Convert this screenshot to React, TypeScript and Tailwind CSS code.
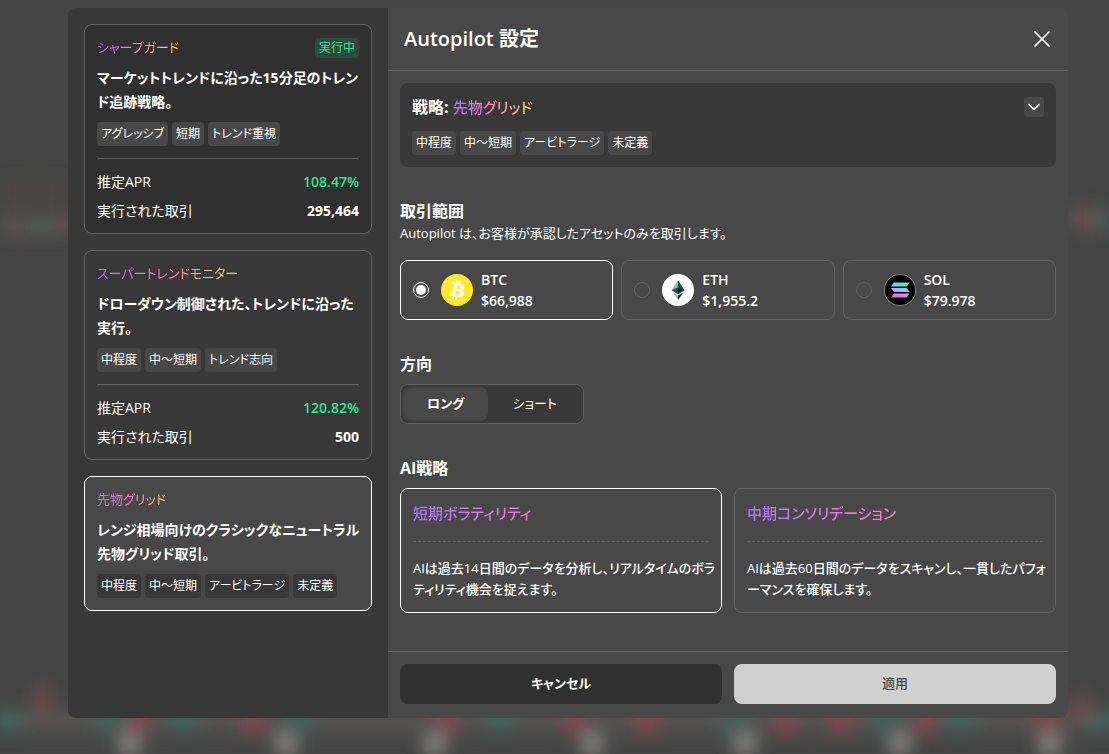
import { useState, type ReactNode } from "react";
import clsx from "clsx";
import { ChevronDown, X } from "lucide-react";

interface Strategy {
  id: string;
  name: string;
  description: string[];
  tags: string[];
  running?: boolean;
  apr?: string;
  trades?: string;
}

const strategies: Strategy[] = [
  {
    id: "sharp-guard",
    name: "シャープガード",
    description: ["マーケットトレンドに沿った15分足のトレン", "ド追跡戦略。"],
    tags: ["アグレッシブ", "短期", "トレンド重視"],
    running: true,
    apr: "108.47%",
    trades: "295,464",
  },
  {
    id: "super-trend",
    name: "スーパートレンドモニター",
    description: ["ドローダウン制御された、トレンドに沿った", "実行。"],
    tags: ["中程度", "中〜短期", "トレンド志向"],
    apr: "120.82%",
    trades: "500",
  },
  {
    id: "futures-grid",
    name: "先物グリッド",
    description: ["レンジ相場向けのクラシックなニュートラル", "先物グリッド取引。"],
    tags: ["中程度", "中〜短期", "アービトラージ", "未定義"],
  },
];

const BtcIcon = () => (
  <svg viewBox="0 0 32 32" className="size-8 shrink-0" aria-hidden="true">
    <circle cx="16" cy="16" r="16" fill="#ffe92e" />
    <path
      fill="#fff"
      d="M23.19 14.02c.31-2.1-1.28-3.22-3.47-3.98l.71-2.84-1.73-.43-.69 2.77c-.46-.11-.92-.22-1.39-.33l.7-2.78-1.73-.43-.71 2.84c-.38-.08-.75-.17-1.1-.26l-2.39-.6-.46 1.85s1.28.3 1.26.31c.7.18.83.64.8 1.01l-.8 3.24c.05.01.11.03.18.06l-.18-.05-1.14 4.53c-.08.21-.3.53-.8.41.02.03-1.25-.31-1.25-.31l-.86 1.98 2.25.56c.42.11.83.22 1.23.32l-.71 2.87 1.72.43.71-2.84c.47.13.93.25 1.38.36l-.71 2.83 1.73.43.71-2.87c2.95.56 5.17.33 6.1-2.33.75-2.15-.04-3.39-1.59-4.19 1.13-.26 1.98-1 2.2-2.54zm-3.95 5.54c-.53 2.15-4.15.99-5.32.69l.95-3.81c1.17.29 4.93.87 4.37 3.12zm.54-5.57c-.49 1.95-3.5.96-4.48.72l.86-3.45c.98.24 4.12.7 3.62 2.73z"
    />
  </svg>
);

const EthIcon = () => (
  <svg viewBox="0 0 32 32" className="size-8 shrink-0" aria-hidden="true">
    <circle cx="16" cy="16" r="16" fill="#fff" />
    <path d="M16 6v8L9.500 16.300z" fill="#8fb8ae" />
    <path d="M16 6l6.500 10.300L16 14z" fill="#1d4a44" />
    <path d="M9.500 16.300L16 13.600v6.600z" fill="#1f5149" />
    <path d="M22.500 16.300L16 13.600v6.600z" fill="#0b2f2b" />
    <path d="M11 18.600L16 21.500V26z" fill="#8fb8ae" />
    <path d="M22 18L16 21.500V26z" fill="#123f39" />
  </svg>
);

const SolIcon = () => (
  <svg viewBox="0 0 32 32" className="size-8 shrink-0" aria-hidden="true">
    <defs>
      <linearGradient id="sol" gradientUnits="userSpaceOnUse" x1="19" y1="9" x2="14" y2="24">
        <stop offset="0.1" stopColor="#4fe8d8" />
        <stop offset="0.5" stopColor="#b4b4f8" />
        <stop offset="0.9" stopColor="#ee6cf0" />
      </linearGradient>
    </defs>
    <circle cx="16" cy="16" r="15.700" fill="#000" stroke="#c9c9c9" strokeWidth="0.600" />
    <g fill="url(#sol)">
      <path d="M9.800 8.600h15.700l-2.700 4H7z" />
      <path d="M7 14h15.800l2.700 4H9.800z" />
      <path d="M9.800 19.600h15.700l-2.700 4H7z" />
    </g>
  </svg>
);

const assets = [
  { symbol: "BTC", price: "$66,988", icon: <BtcIcon /> },
  { symbol: "ETH", price: "$1,955.2", icon: <EthIcon /> },
  { symbol: "SOL", price: "$79.978", icon: <SolIcon /> },
];

const aiModes = [
  {
    id: "short",
    name: "短期ボラティリティ",
    text: ["AIは過去14日間のデータを分析し、リアルタイムのボラ", "ティリティ機会を捉えます。"],
  },
  {
    id: "mid",
    name: "中期コンソリデーション",
    text: ["AIは過去60日間のデータをスキャンし、一貫したパフォ", "ーマンスを確保します。"],
  },
];

const GradientText = ({ children, block }: { children: ReactNode; block?: boolean }) => (
  <span
    className={clsx(
      "bg-linear-to-r from-[#ac74ff] via-[#ff7ac6] via-45% to-[#ffd35c] bg-clip-text text-transparent",
      block ? "block" : "inline-block"
    )}
  >
    {children}
  </span>
);

const Lines = ({ lines }: { lines: string[] }) => (
  <>
    {lines.map((line) => (
      <span key={line} className="block whitespace-nowrap">
        {line}
      </span>
    ))}
  </>
);

const Tags = ({ tags, dark }: { tags: string[]; dark?: boolean }) => (
  <span className="flex gap-1">
    {tags.map((tag) => (
      <span
        key={tag}
        className={clsx(
          "rounded px-1 text-xs leading-6 whitespace-nowrap",
          dark ? "bg-[#383838]" : "bg-[#484848]"
        )}
      >
        {tag}
      </span>
    ))}
  </span>
);

// blurred chart that shows through behind the dialog
const Backdrop = () => (
  <svg
    className="absolute inset-0 h-full w-full"
    viewBox="0 0 1109 754"
    preserveAspectRatio="none"
    aria-hidden="true"
  >
    <defs>
      <filter id="soft" x="-50%" y="-50%" width="200%" height="200%">
        <feGaussianBlur stdDeviation="8" />
      </filter>
    </defs>
    <g filter="url(#soft)">
      <rect x="0" y="180" width="68" height="30" fill="#4c4543" />
      <rect x="0" y="218" width="80" height="16" fill="#545a57" />
      <rect x="14" y="220" width="10" height="16" fill="#644a4a" />
      <rect x="58" y="215" width="12" height="20" fill="#664a4a" />
      <rect x="1068" y="208" width="40" height="20" fill="#555755" />
      <rect x="1079" y="208" width="12" height="24" fill="#704c4c" />
      <rect x="1100" y="208" width="12" height="24" fill="#44605a" />
      <rect x="0" y="708" width="1109" height="26" fill="#54514f" />
      {[137, 253, 445, 575, 646, 785, 842, 925, 1046].map((x) => (
        <rect key={x} x={x - 9} y="706" width="18" height="28" fill="#85474c" />
      ))}
      {[8, 110, 184, 300, 500, 735, 885, 960, 1100].map((x) => (
        <rect key={x} x={x - 16} y="710" width="32" height="22" fill="#42605a" />
      ))}
      <rect x="36" y="686" width="14" height="26" fill="#724a4a" />
      <rect x="1076" y="694" width="12" height="26" fill="#724a4a" />
      {[130, 286, 435, 592, 745, 900, 1050].map((x) => (
        <circle key={x} cx={x} cy="744" r="13" fill="#7e7c7a" />
      ))}
    </g>
  </svg>
);

const StrategyCard = ({
  strategy,
  selected,
  onSelect,
}: {
  strategy: Strategy;
  selected: boolean;
  onSelect: () => void;
}) => (
  <button
    type="button"
    aria-pressed={selected}
    onClick={onSelect}
    className={clsx(
      "block w-full rounded-lg border p-3 text-left",
      selected ? "border-white bg-[#484848]" : "border-[#626262]",
      strategy.running && "bg-[#303030]"
    )}
  >
    <span className="flex h-[21px] items-center justify-between text-[13px]">
      <GradientText>{strategy.name}</GradientText>
      {strategy.running && (
        <span className="rounded bg-[#2d4a3e] px-1 text-xs leading-5 text-[#34e39a]">実行中</span>
      )}
    </span>
    <span className="my-2 block text-sm leading-6 font-bold">
      <Lines lines={strategy.description} />
    </span>
    <Tags tags={strategy.tags} dark={selected} />
    {strategy.apr && (
      <span className="mt-3 flex flex-col gap-2 border-t border-[#626262] pt-3 text-sm leading-[21px]">
        <span className="flex justify-between">
          <span>推定APR</span>
          <span className="font-semibold text-[#34e39a]">{strategy.apr}</span>
        </span>
        <span className="flex justify-between">
          <span>実行された取引</span>
          <span className="font-bold">{strategy.trades}</span>
        </span>
      </span>
    )}
  </button>
);

const App = () => {
  const [selectedId, setSelectedId] = useState("futures-grid");
  const [asset, setAsset] = useState("BTC");
  const [side, setSide] = useState("ロング");
  const [mode, setMode] = useState("short");

  const current = strategies.find((s) => s.id === selectedId) ?? strategies[0];

  return (
    <div className="relative flex min-h-screen overflow-hidden bg-[#454545] pt-2 pr-[41px] pb-9 pl-[68px] font-['Open_Sans','Noto_Sans_CJK_JP',sans-serif] text-white [font-feature-settings:'palt']">
      <Backdrop />
      <div
        role="dialog"
        aria-labelledby="dialog-title"
        className="relative flex flex-1 overflow-hidden rounded-lg bg-[#484848]"
      >
        <aside className="flex w-80 shrink-0 flex-col gap-4 bg-[#383838] p-4">
          {strategies.map((s) => (
            <StrategyCard
              key={s.id}
              strategy={s}
              selected={s.id === selectedId}
              onSelect={() => setSelectedId(s.id)}
            />
          ))}
        </aside>

        <section className="flex min-w-0 flex-1 flex-col">
          <header className="flex items-center justify-between border-b border-[#626262] p-4">
            <h1 id="dialog-title" className="text-xl leading-[30px] font-semibold">
              Autopilot 設定
            </h1>
            <button type="button" aria-label="閉じる" className="-mr-1">
              <X className="size-7" strokeWidth={1.5} />
            </button>
          </header>

          <div className="flex flex-1 flex-col gap-8 p-3">
            <div className="rounded-lg bg-[#383838] p-3">
              <div className="mb-3 flex items-center justify-between">
                <h2 className="text-base leading-6 font-bold">
                  戦略:{" "}
                  <span className="text-[15px] font-medium">
                    <GradientText>{current.name}</GradientText>
                  </span>
                </h2>
                <button
                  type="button"
                  aria-label="詳細を表示"
                  className="flex size-5 items-center justify-center rounded bg-[#484848]"
                >
                  <ChevronDown className="size-5" strokeWidth={2} />
                </button>
              </div>
              <Tags tags={current.tags} />
            </div>

            <div>
              <h2 className="text-base leading-6 font-bold">取引範囲</h2>
              <p className="text-[13px] leading-[21px]">
                Autopilot は、お客様が承認したアセットのみを取引します。
              </p>
              <div className="mt-4 grid grid-cols-3 gap-2">
                {assets.map(({ symbol, price, icon }) => (
                  <label
                    key={symbol}
                    className={clsx(
                      "flex items-center rounded-lg border px-3 py-2",
                      asset === symbol ? "border-white" : "border-[#626262]"
                    )}
                  >
                    <input
                      type="radio"
                      name="asset"
                      value={symbol}
                      checked={asset === symbol}
                      onChange={() => setAsset(symbol)}
                      className="mr-3 size-4 shrink-0 appearance-none rounded-full border border-[#626262] checked:border-white checked:bg-white checked:bg-clip-content checked:p-0.5"
                    />
                    {icon}
                    <span className="ml-2 text-sm leading-[21px] font-semibold">
                      <span className="block">{symbol}</span>
                      <span className="block">{price}</span>
                    </span>
                  </label>
                ))}
              </div>
            </div>

            <div>
              <h2 className="mb-2 text-base leading-6 font-bold">方向</h2>
              <div className="inline-flex h-10 rounded-lg border border-[#626262] bg-[#383838] p-0.5 align-top text-[13px]">
                {["ロング", "ショート"].map((label) => (
                  <button
                    key={label}
                    type="button"
                    aria-pressed={side === label}
                    onClick={() => setSide(label)}
                    className={clsx(
                      "rounded-lg px-6",
                      side === label && "bg-[#484848] font-bold"
                    )}
                  >
                    {label}
                  </button>
                ))}
              </div>
            </div>

            <div>
              <h2 className="mb-2 text-base leading-6 font-bold">AI戦略</h2>
              <div className="grid grid-cols-2 gap-3">
                {aiModes.map((m) => (
                  <button
                    key={m.id}
                    type="button"
                    aria-pressed={mode === m.id}
                    onClick={() => setMode(m.id)}
                    className={clsx(
                      "rounded-lg border p-3 text-left",
                      mode === m.id ? "border-white" : "border-[#626262]"
                    )}
                  >
                    <span className="block text-[15px] leading-6 font-medium">
                      <GradientText block>{m.name}</GradientText>
                    </span>
                    <span className="mt-4 block border-t border-dashed border-[#626262] pt-4 text-[13px] leading-[21px] font-medium">
                      <Lines lines={m.text} />
                    </span>
                  </button>
                ))}
              </div>
            </div>
          </div>

          <footer className="grid grid-cols-2 gap-3 border-t border-[#626262] px-3 pt-3 pb-3.5 text-[13px]">
            <button type="button" className="h-10 rounded-lg bg-[#303030] font-bold">
              キャンセル
            </button>
            <button type="button" className="h-10 rounded-lg bg-[#d0d0d0] font-medium text-[#484848]">
              適用
            </button>
          </footer>
        </section>
      </div>
    </div>
  );
};

export default App;
